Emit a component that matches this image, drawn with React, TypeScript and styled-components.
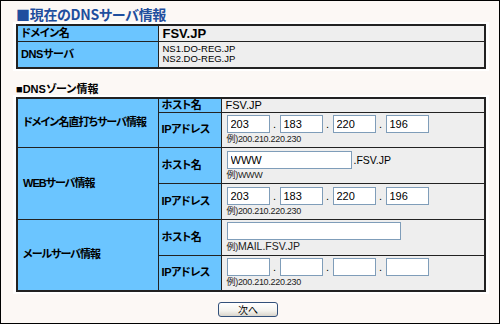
import styled, { createGlobalStyle } from 'styled-components';

const GlobalStyle = createGlobalStyle`
  html, body {
    margin: 0;
    padding: 0;
    background: #fcf8f5;
  }
  body {
    font-family: "Liberation Sans", "Noto Sans CJK JP", sans-serif;
    color: #000;
  }
`;

type HostField =
  | { kind: 'text'; value: string }
  | { kind: 'input'; value: string; width: number; suffix?: string; example: string; large?: boolean };

interface Zone {
  title: string;
  host: HostField;
  hostHeight: number;
  ipHeight: number;
  ip: string[];
}

// row heights are given without the 1px rule under each row
const zones: Zone[] = [
  {
    title: 'ドメイン名直打ちサーバ情報',
    host: { kind: 'text', value: 'FSV.JP' },
    hostHeight: 14,
    ipHeight: 35,
    ip: ['203', '183', '220', '196'],
  },
  {
    title: 'WEBサーバ情報',
    host: { kind: 'input', value: 'WWW', width: 125, suffix: '.FSV.JP', example: 'WWW' },
    hostHeight: 36,
    ipHeight: 36,
    ip: ['203', '183', '220', '196'],
  },
  {
    title: 'メールサーバ情報',
    host: { kind: 'input', value: '', width: 174, example: 'MAIL.FSV.JP', large: true },
    hostHeight: 36,
    ipHeight: 36,
    ip: ['', '', '', ''],
  },
];

function IpField({ values }: { values: string[] }) {
  return (
    <FieldStack>
      <InputLine>
        {values.map((v, i) => (
          <span key={i} style={{ display: 'contents' }}>
            {i > 0 && <Dot>.</Dot>}
            <TextInput $width={43} defaultValue={v} />
          </span>
        ))}
      </InputLine>
      <Example>例)200.210.220.230</Example>
    </FieldStack>
  );
}

function HostCell({ host }: { host: HostField }) {
  if (host.kind === 'text') return <PlainValue>{host.value}</PlainValue>;
  return (
    <FieldStack>
      <InputLine>
        <TextInput $width={host.width} defaultValue={host.value} />
        {host.suffix && <Suffix>{host.suffix}</Suffix>}
      </InputLine>
      <Example>
        例)<ExampleValue $large={host.large}>{host.example}</ExampleValue>
      </Example>
    </FieldStack>
  );
}

export default function App() {
  return (
    <>
      <GlobalStyle />
      <Frame>
        <Title>■現在のDNSサーバ情報</Title>
        <Panel>
          <InfoTable>
            <colgroup>
              <col style={{ width: 141 }} />
              <col />
            </colgroup>
            <tbody>
              <tr style={{ height: 16 }}>
                <LabelCell>ドメイン名</LabelCell>
                <ValueCell>
                  <DomainValue>FSV.JP</DomainValue>
                </ValueCell>
              </tr>
              <tr style={{ height: 26 }}>
                <LabelCell>DNSサーバ</LabelCell>
                <ValueCell>
                  <NsList>
                    <span>NS1.DO-REG.JP</span>
                    <span>NS2.DO-REG.JP</span>
                  </NsList>
                </ValueCell>
              </tr>
            </tbody>
          </InfoTable>
        </Panel>

        <SectionHeading>■DNSゾーン情報</SectionHeading>
        <Panel>
          <InfoTable>
            <colgroup>
              <col style={{ width: 141 }} />
              <col style={{ width: 63 }} />
              <col />
            </colgroup>
            <tbody>
              {zones.map(z => [
                <tr key={z.title + '-host'} style={{ height: z.hostHeight }}>
                  <LabelCell rowSpan={2} $indent={5} $tight>{z.title}</LabelCell>
                  <LabelCell>ホスト名</LabelCell>
                  <ValueCell>
                    <HostCell host={z.host} />
                  </ValueCell>
                </tr>,
                <tr key={z.title + '-ip'} style={{ height: z.ipHeight }}>
                  <LabelCell>IPアドレス</LabelCell>
                  <ValueCell>
                    <IpField values={z.ip} />
                  </ValueCell>
                </tr>,
              ])}
            </tbody>
          </InfoTable>
        </Panel>

        <ButtonBar>
          <NextButton type="button">次へ</NextButton>
        </ButtonBar>
      </Frame>
    </>
  );
}

const Frame = styled.div`
  box-sizing: border-box;
  width: 500px;
  height: 324px;
  border: 1px solid #000;
  background: #fcf8f5;
  padding: 5px 10px 0 12px;
  display: flex;
  flex-direction: column;
`;

const Title = styled.h1`
  margin: 0 0 0 3px;
  height: 16px;
  font: bold 14px/16px "Noto Sans CJK JP", sans-serif;
  font-feature-settings: "palt";
  letter-spacing: -0.3px;
  color: #1f4e9e;
  white-space: nowrap;
`;

const Panel = styled.div`
  box-sizing: border-box;
  width: 476px;
  background: #fff;
  padding: 2px 3px;
`;

const SectionHeading = styled.h2`
  margin: 12px 0 0 3px;
  height: 12px;
  font: bold 11px/12px "Liberation Sans", "Noto Sans CJK JP", sans-serif;
  font-feature-settings: "palt";
  white-space: nowrap;
`;

const InfoTable = styled.table`
  width: 470px;
  table-layout: fixed;
  border-collapse: collapse;
  border: 2px solid #222;
`;

const LabelCell = styled.th<{ $indent?: number; $tight?: boolean }>`
  background: #6bc5ff;
  border: 1px solid #222;
  padding: 0 0 0 ${p => p.$indent ?? 3}px;
  text-align: left;
  vertical-align: middle;
  font: bold 11px/13px "Liberation Sans", "Noto Sans CJK JP", sans-serif;
  font-feature-settings: "palt";
  letter-spacing: ${p => (p.$tight ? '-1px' : '-0.4px')};
  white-space: nowrap;
`;

const ValueCell = styled.td`
  background: #eeeeee;
  border: 1px solid #222;
  padding: 0 0 0 4px;
  vertical-align: middle;
  font-size: 11px;
`;

const DomainValue = styled.span`
  font: bold 13px/15px "Liberation Sans", sans-serif;
`;

const NsList = styled.div`
  display: flex;
  flex-direction: column;
  font: 9.5px/10px "Liberation Sans", sans-serif;
`;

const PlainValue = styled.span`
  font: 11px/13px "Liberation Sans", sans-serif;
`;

const FieldStack = styled.div`
  display: flex;
  flex-direction: column;
  gap: 1px;
  padding-left: 1px;
`;

const InputLine = styled.div`
  display: flex;
  align-items: center;
`;

const TextInput = styled.input<{ $width: number }>`
  box-sizing: border-box;
  width: ${p => p.$width}px;
  height: 18px;
  margin: 0;
  padding: 0 3px;
  border: 1px solid #7f9db9;
  background: #fff;
  font: 11px "Liberation Sans", sans-serif;
  color: #000;
  outline: none;
`;

const Dot = styled.span`
  width: 10px;
  text-align: center;
  font: 11px "Liberation Sans", sans-serif;
`;

const Suffix = styled.span`
  margin-left: 2px;
  font: 10.5px "Liberation Sans", sans-serif;
`;

const Example = styled.div`
  font: 9px/10px "Liberation Sans", "Noto Sans CJK JP", sans-serif;
  letter-spacing: -0.3px;
  color: #222;
  white-space: nowrap;
`;

const ExampleValue = styled.span<{ $large?: boolean }>`
  font-size: ${p => (p.$large ? '10.5px' : '9px')};
  letter-spacing: ${p => (p.$large ? '0' : '-0.3px')};
`;

const ButtonBar = styled.div`
  display: flex;
  justify-content: center;
  padding-right: 6px;
  margin-top: 8px;
`;

const NextButton = styled.button`
  width: 60px;
  height: 15px;
  padding: 0;
  border: 1px solid #32507a;
  border-radius: 3px;
  background: linear-gradient(#ffffff 0%, #f4f3ee 60%, #d9d5cc 100%);
  font: 10px/13px "Noto Sans CJK JP", sans-serif;
  color: #000;
`;
